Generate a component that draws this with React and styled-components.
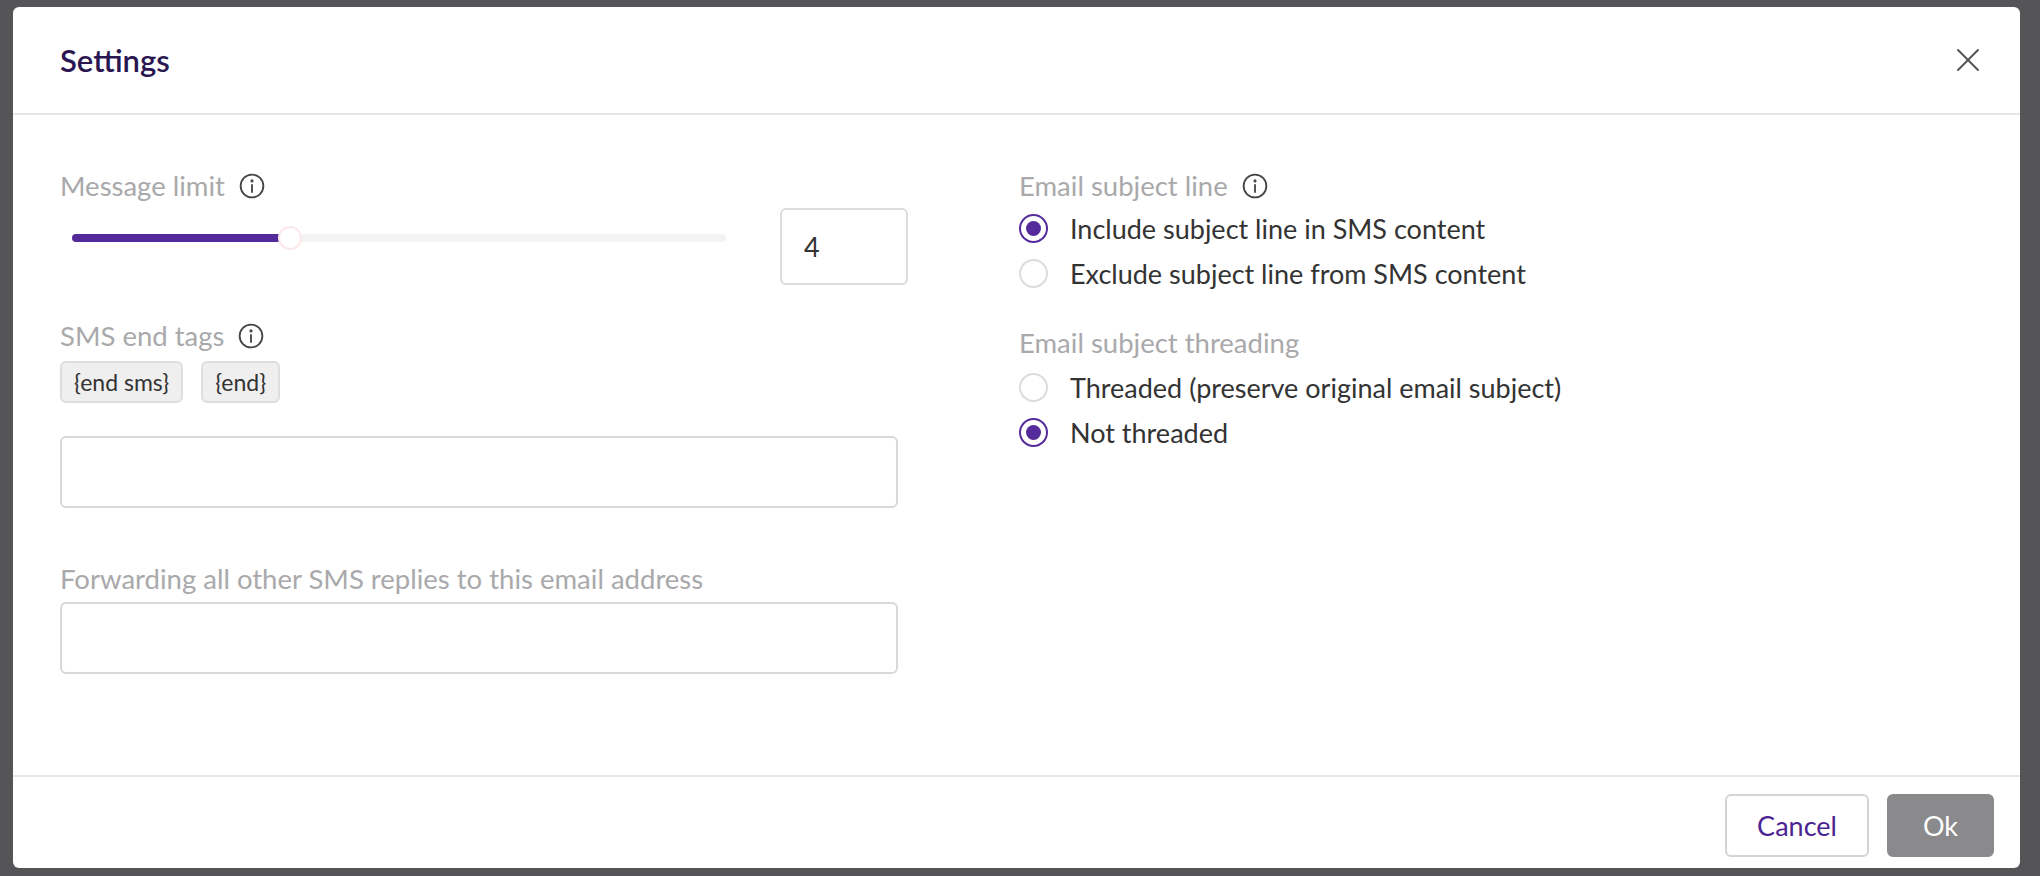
import styled, { createGlobalStyle } from "styled-components";

const Global = createGlobalStyle`
  html, body { margin: 0; padding: 0; }
  body {
    background: #555557;
    font-family: Lato, "Noto Sans", sans-serif;
    width: 2040px;
    height: 876px;
    overflow: hidden;
  }
`;

const Overlay = styled.div`
  height: 876px;
  padding: 7px 20px 8px 13px;
  box-sizing: border-box;
`;

const Modal = styled.div`
  background: #fff;
  border-radius: 6px;
  height: 100%;
  display: flex;
  flex-direction: column;
`;

const Header = styled.div`
  height: 106px;
  border-bottom: 2px solid #e6e6e6;
  display: flex;
  align-items: center;
  justify-content: space-between;
  padding: 0 40px 0 47px;
`;

const Title = styled.h1`
  margin: 0;
  font-size: 31px;
  font-weight: 600;
  color: #2a1650;
`;

const Close = styled.button`
  border: 0;
  background: none;
  padding: 0;
  display: flex;
  color: #555;
`;

const Body = styled.div`
  flex: 1;
  display: flex;
  padding: 55px 47px 0;
`;

const LeftCol = styled.div`
  width: 848px;
  display: flex;
  flex-direction: column;
`;

const RightCol = styled.div`
  margin-left: 111px;
  display: flex;
  flex-direction: column;
`;

const Label = styled.div`
  display: flex;
  align-items: center;
  gap: 14px;
  font-size: 27.5px;
  line-height: 32px;
  color: #a9a9ab;
  margin-top: ${(p) => p.$mt || 0}px;
`;

const SliderRow = styled.div`
  display: flex;
  align-items: flex-start;
  margin-top: 6px;
`;

const Track = styled.div`
  position: relative;
  width: 654px;
  height: 8px;
  margin: 26px 0 0 12px;
  background: #f3f3f3;
  border-radius: 4px;
`;

const Fill = styled.div`
  height: 100%;
  background: #552b9c;
  border-radius: 4px;
`;

const Thumb = styled.div`
  position: absolute;
  top: 50%;
  width: 20px;
  height: 20px;
  margin: -12px 0 0 -10px;
  border-radius: 50%;
  background: #fff;
  border: 2px solid #fbe9ea;
`;

const NumberBox = styled.div`
  margin-left: 54px;
  width: 128px;
  height: 77px;
  box-sizing: border-box;
  border: 2px solid #dcdcdc;
  border-radius: 6px;
  display: flex;
  align-items: center;
  padding-left: 22px;
  font-size: 27px;
  color: #333;
`;

const Tags = styled.div`
  display: flex;
  gap: 18px;
  margin-top: 9px;
`;

const Tag = styled.span`
  height: 42px;
  box-sizing: border-box;
  padding: 0 12px;
  display: flex;
  align-items: center;
  background: #efefef;
  border: 2px solid #dedede;
  border-radius: 6px;
  font-size: 23px;
  color: #333;
`;

const Input = styled.div`
  height: 72px;
  width: 838px;
  box-sizing: border-box;
  border: 2px solid #d9d9d9;
  border-radius: 6px;
  margin-top: ${(p) => p.$mt}px;
`;

const Option = styled.div`
  display: flex;
  align-items: center;
  gap: 22px;
  height: 45px;
  font-size: 27px;
  color: #333;
`;

const Radio = styled.span`
  width: 29px;
  height: 29px;
  box-sizing: border-box;
  border-radius: 50%;
  border: 2px solid ${(p) => (p.$on ? "#552b9c" : "#dcdcdc")};
  display: flex;
  align-items: center;
  justify-content: center;
  &::after {
    content: "";
    width: 15px;
    height: 15px;
    border-radius: 50%;
    background: ${(p) => (p.$on ? "#552b9c" : "transparent")};
  }
`;

const Options = styled.div`
  margin-top: ${(p) => p.$mt}px;
`;

const Footer = styled.div`
  height: 93px;
  border-top: 2px solid #e6e6e6;
  display: flex;
  align-items: flex-start;
  justify-content: flex-end;
  gap: 18px;
  padding: 17px 26px 0 0;
  box-sizing: border-box;
`;

const Button = styled.button`
  height: 63px;
  padding: 0 ${(p) => (p.$primary ? 34 : 30)}px;
  border-radius: 6px;
  font-family: inherit;
  font-size: 27px;
  border: 2px solid ${(p) => (p.$primary ? "#8a8a8d" : "#d4d4d4")};
  background: ${(p) => (p.$primary ? "#8a8a8d" : "#fff")};
  color: ${(p) => (p.$primary ? "#fff" : "#4b2393")};
`;

const Info = () => (
  <svg width="26" height="26" viewBox="0 0 24 24" fill="none" stroke="#444" strokeWidth="1.7">
    <circle cx="12" cy="12" r="10.5" />
    <line x1="12" y1="11" x2="12" y2="17.5" strokeLinecap="round" />
    <circle cx="12" cy="7.3" r="0.6" fill="#444" />
  </svg>
);

export default function App() {
  const value = 4;
  const pct = 33;
  return (
    <>
      <Global />
      <Overlay>
        <Modal>
          <Header>
            <Title>Settings</Title>
            <Close>
              <svg width="24" height="24" viewBox="0 0 24 24" stroke="#555" strokeWidth="2" strokeLinecap="round">
                <line x1="2" y1="2" x2="22" y2="22" />
                <line x1="22" y1="2" x2="2" y2="22" />
              </svg>
            </Close>
          </Header>
          <Body>
            <LeftCol>
              <Label>Message limit <Info /></Label>
              <SliderRow>
                <Track>
                  <Fill style={{ width: `${pct}%` }} />
                  <Thumb style={{ left: `${pct}%` }} />
                </Track>
                <NumberBox>{value}</NumberBox>
              </SliderRow>
              <Label $mt={35}>SMS end tags <Info /></Label>
              <Tags>
                <Tag>{"{end sms}"}</Tag>
                <Tag>{"{end}"}</Tag>
              </Tags>
              <Input $mt={33} />
              <Label $mt={55}>Forwarding all other SMS replies to this email address</Label>
              <Input $mt={7} />
            </LeftCol>
            <RightCol>
              <Label>Email subject line <Info /></Label>
              <Options $mt={4}>
                <Option><Radio $on />Include subject line in SMS content</Option>
                <Option><Radio />Exclude subject line from SMS content</Option>
              </Options>
              <Label $mt={31}>Email subject threading</Label>
              <Options $mt={6}>
                <Option><Radio />Threaded (preserve original email subject)</Option>
                <Option><Radio $on />Not threaded</Option>
              </Options>
            </RightCol>
          </Body>
          <Footer>
            <Button>Cancel</Button>
            <Button $primary>Ok</Button>
          </Footer>
        </Modal>
      </Overlay>
    </>
  );
}
